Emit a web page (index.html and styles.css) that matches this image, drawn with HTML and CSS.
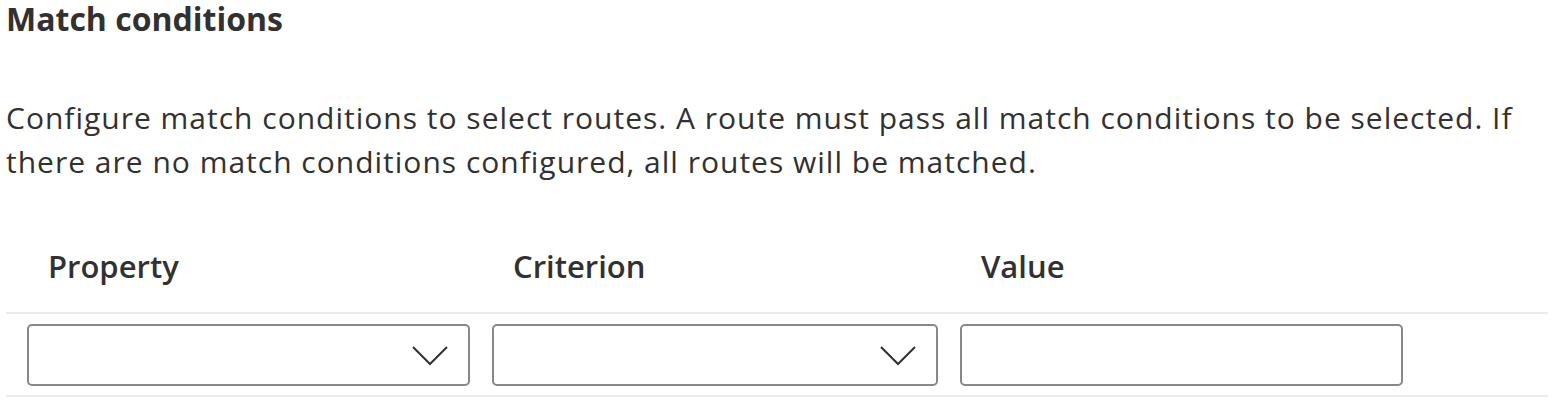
FILE: index.html
```html
<!DOCTYPE html>
<html lang="en">
<head>
    <meta charset="UTF-8">
    <title>Match conditions</title>
    <link rel="stylesheet" href="styles.css">
</head>
<body>
    <div class="section">
        <h2 class="section-title">Match conditions</h2>
        <p class="section-desc">Configure match conditions to select routes. A route must pass all match conditions to be selected. If there are no match conditions configured, all routes will be matched.</p>

        <div class="conditions">
            <div class="conditions-head">
                <div class="col-label">Property</div>
                <div class="col-label">Criterion</div>
                <div class="col-label">Value</div>
            </div>
            <div class="conditions-row">
                <div class="dropdown">
                    <svg class="chevron" width="36" height="22" viewBox="0 0 36 22"><path d="M1 3 L18 20 L35 3" fill="none" stroke="#323130" stroke-width="2"/></svg>
                </div>
                <div class="dropdown">
                    <svg class="chevron" width="36" height="22" viewBox="0 0 36 22"><path d="M1 3 L18 20 L35 3" fill="none" stroke="#323130" stroke-width="2"/></svg>
                </div>
                <input class="text-field" type="text">
            </div>
        </div>
    </div>
</body>
</html>
```

FILE: styles.css
```css
body {
    margin: 0;
    font-family: "Open Sans", "Noto Sans", sans-serif;
    color: #323130;
    background: #fff;
}
.section {
    padding: 0 4px 0 6px;
}
.section-title {
    font-size: 32px;
    font-weight: 700;
    margin: 0;
    line-height: 38px;
}
.section-desc {
    font-size: 30px;
    letter-spacing: 1px;
    line-height: 44px;
    margin: 58px 0 0 0;
}
.conditions {
    margin-top: 47px;
}
.conditions-head,
.conditions-row {
    display: grid;
    grid-template-columns: 443px 446px 443px;
    column-gap: 22px;
    padding-left: 21px;
}
.conditions-head {
    height: 81px;
    border-bottom: 2px solid #edebe9;
}
.col-label {
    padding-left: 21px;
    font-size: 31px;
    font-weight: 600;
    line-height: 70px;
}
.conditions-row {
    padding-top: 10px;
    padding-bottom: 9px;
    border-bottom: 2px solid #edebe9;
}
.dropdown,
.text-field {
    box-sizing: border-box;
    height: 62px;
    border: 2px solid #8a8886;
    border-radius: 5px;
    background: #fff;
    margin: 0;
}
.dropdown {
    display: flex;
    align-items: center;
    justify-content: flex-end;
    padding-right: 20px;
}
.chevron {
    display: block;
}
.text-field {
    width: 100%;
    padding: 0 10px;
    font: inherit;
}
```
